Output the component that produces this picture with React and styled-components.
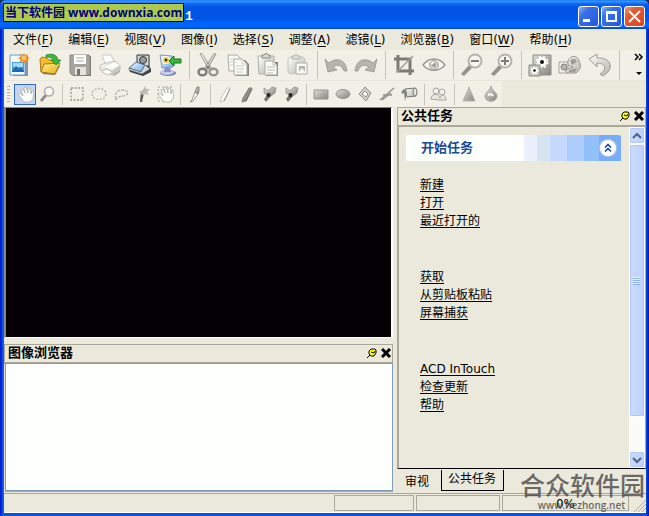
import styled, { createGlobalStyle, css } from "styled-components";

const GlobalStyle = createGlobalStyle`
  * {
    box-sizing: border-box;
  }
  body {
    margin: 0;
    background: #1a2a5c;
    font-family: "DejaVu Sans", "Noto Sans CJK SC", sans-serif;
    font-size: 12px;
    color: #000;
  }
  button {
    font: inherit;
    color: inherit;
    padding: 0;
    margin: 0;
    border: 0;
    background: none;
  }
`;

const menus = [
  ["文件", "F"],
  ["编辑", "E"],
  ["视图", "V"],
  ["图像", "I"],
  ["选择", "S"],
  ["调整", "A"],
  ["滤镜", "L"],
  ["浏览器", "B"],
  ["窗口", "W"],
  ["帮助", "H"],
];

const taskGroups = [
  ["新建", "打开", "最近打开的"],
  ["获取", "从剪贴板粘贴", "屏幕捕获"],
  ["ACD InTouch", "检查更新", "帮助"],
];

/* shared gradients for all toolbar icons */
const IconDefs = () => (
  <HiddenSvg aria-hidden="true">
    <defs>
      <linearGradient id="silver" x1="0" y1="0" x2="1" y2="1">
        <stop offset="0" stopColor="#fdfdfa" />
        <stop offset="1" stopColor="#b5b4ac" />
      </linearGradient>
      <linearGradient id="steel" x1="0" y1="0" x2="1" y2="1">
        <stop offset="0" stopColor="#dddcd6" />
        <stop offset="1" stopColor="#85847d" />
      </linearGradient>
      <linearGradient id="blue" x1="0" y1="0" x2="1" y2="1">
        <stop offset="0" stopColor="#f4faff" />
        <stop offset="1" stopColor="#69a9ea" />
      </linearGradient>
      <linearGradient id="gold" x1="0" y1="0" x2="1" y2="1">
        <stop offset="0" stopColor="#fff18a" />
        <stop offset="1" stopColor="#e8ac18" />
      </linearGradient>
    </defs>
  </HiddenSvg>
);

const mainIcons = {
  新建: (
    <>
      <path d="M4 3h16v20H5z" fill="#8c949c" />
      <path d="M2 2h15v20H2z" fill="#f4faff" stroke="#5aa0d8" />
      <path d="M4 9h12v10H4z" fill="#4a9be6" />
      <path d="M5 10h10v4H5z" fill="#a8dcff" />
      <path d="m4 18 4-5 3 3 2-2 3 4v1H4z" fill="#1f68b6" />
      <path d="m16 0 1.3 2.3L20 1.200l-.5 2.800L22 5l-2.300 1.500L20 9.500l-2.700-1.200L16 11l-1.500-2.700-2.700.9.5-2.800L10 5l2.500-1.200-.5-2.600 2.700 1z" fill="#f58a1f" />
      <circle cx="16" cy="5" r="2.500" fill="#ffc65c" />
    </>
  ),
  打开: (
    <>
      <path d="M4 21 17 22l5-9-2-1z" fill="#77736a" />
      <path d="M2 6 4 4l5 1 2 2 7 0v5l-2 9-13-2z" fill="#f3bd2c" stroke="#a77b13" />
      <path d="m6 11 16-1-5 11-14-2z" fill="url(#gold)" stroke="#a77b13" />
      <path d="M8 2c7-2 11 0 12 5h3l-5 5-5-5h3c-1-2-4-3-8-3z" fill="#38b83c" stroke="#168424" strokeWidth=".7" />
    </>
  ),
  保存: (
    <>
      <path d="M3 3h20v20H5z" fill="#77766f" />
      <path d="M2 2h19l1 1v19H4l-2-2z" fill="#a4a39d" stroke="#8b8a84" />
      <path d="M6 2h12v9H6z" fill="#fff" />
      <path d="M8 5h8M8 8h8" stroke="#aaa" />
      <path d="M7 14h11v8H7z" fill="#e3e2dd" />
      <path d="M9 16h3v6H9z" fill="#77766f" />
    </>
  ),
  打印: (
    <>
      <path d="m5 14 11 9 6-4v-5l-4-2z" fill="#aaa9a2" />
      <path d="M4 2h9l4 8-9 3z" fill="#fff" stroke="#c8c7c0" />
      <path d="m2 12 6-2 9-2 5 4v5l-8 5-12-5z" fill="url(#silver)" stroke="#c4c3bc" />
      <path d="m2 12 12 5 8-5-5-3-9 4z" fill="#fbfbf8" />
      <path d="m8 16 7 3-5 3-6-3z" fill="#fff" stroke="#c2c1ba" />
    </>
  ),
  扫描: (
    <>
      <path d="m1 16 6-5h13l3 5v3l-8 4-13-4z" fill="#3e4248" />
      <path d="M9 2h12v11H9z" fill="#d9dad6" stroke="#303236" />
      <circle cx="15" cy="7" r="3.500" fill="#999c9f" stroke="#333" />
      <path d="m1 15 7-6 9 3-4 7z" fill="url(#blue)" stroke="#4f6b8a" />
      <path d="m1 15 12 4 4-7 5 4-8 5-13-4z" fill="#d5d8dc" stroke="#555" strokeWidth=".6" />
    </>
  ),
  相机: (
    <>
      <ellipse cx="10" cy="20" rx="8" ry="3" fill="#7179a8" />
      <ellipse cx="9" cy="19" rx="7" ry="3" fill="#c6cbed" />
      <path d="m7 14 5-1 1 6H6z" fill="#8890c4" />
      <path d="m2 2 12 1 1 11-11 1z" fill="url(#blue)" stroke="#8494c8" />
      <circle cx="8" cy="7" r="4" fill="#fff" />
      <circle cx="8" cy="7" r="3" fill="#f4cf10" />
      <circle cx="8" cy="7" r="1.300" fill="#111" />
      <path d="m11 8 5-5v3h7v4h-7v3z" fill="#32b832" stroke="#137a17" />
    </>
  ),
  剪切: (
    <>
      <path d="m4 1 2-.5 9 14-2 2zM20 1l-2-.5-9 14 2 2z" fill="url(#silver)" stroke="#888780" strokeWidth=".8" />
      <ellipse cx="6.500" cy="19" rx="4" ry="3.300" fill="none" stroke="#7c7b75" strokeWidth="2.500" />
      <ellipse cx="17.500" cy="19" rx="4" ry="3.300" fill="none" stroke="#96958e" strokeWidth="2.500" />
      <circle cx="12" cy="14" r="1.500" fill="#777" />
    </>
  ),
  复制: (
    <>
      <path d="M2 2h9l4 4v12H3z" fill="#fafaf7" stroke="#aaa9a2" />
      <path d="M10 7h9l4 4v12H10z" fill="#85847d" />
      <path d="M8 6h8l5 5v11H8z" fill="#fafaf7" stroke="#aaa9a2" />
      <path d="M16 6v5h5M10 13h8M10 16h8M10 19h7M4 6h4M4 9h3M4 12h3" fill="none" stroke="#cccbc4" />
    </>
  ),
  粘贴: (
    <>
      <path d="M2 3h16v18H3z" fill="url(#silver)" stroke="#b0afa8" />
      <path d="M6 4V2h2l2-2 2 2h2v3H6z" fill="#d9d8d1" stroke="#888780" />
      <path d="M10 9h12v14H10z" fill="#85847d" />
      <path d="M9 8h8l4 4v10H9z" fill="#fafaf7" stroke="#aaa9a2" />
      <path d="M17 8v4h4M11 14h8M11 17h8M11 20h6" fill="none" stroke="#bcbbb4" />
    </>
  ),
  粘贴为新图像: (
    <>
      <path d="m2 6 2-2h13l2 2v14l-15 1-2-2z" fill="url(#silver)" stroke="#c4c3bc" />
      <path d="M6 5V3h2l2-2 2 2h2v3H6z" fill="#dddcd6" stroke="#b4b3ac" />
      <path d="M10 10h11v11H10z" fill="#fafaf7" stroke="#aeada6" />
      <path d="M13 13h6v6h-6z" fill="#b5b4ae" />
      <path d="m13 19 3-4 3 4z" fill="#fff" />
    </>
  ),
  撤消: <path d="m1 6 3 13 9-2-4-3c5-3 9-2 11 4h3C22 6 12 4 5 10z" fill="#b5b4ad" stroke="#8d8c86" strokeWidth=".7" />,
  重做: <path d="m23 6-3 13-9-2 4-3c-5-3-9-2-11 4H1C2 6 12 4 19 10z" fill="#b5b4ad" stroke="#8d8c86" strokeWidth=".7" />,
  裁剪: (
    <>
      <path d="M6 2v16h16M2 6h16v16" fill="none" stroke="#7c7b74" strokeWidth="3" />
      <path d="M5 19 21 3" stroke="#a09f98" strokeWidth="1.500" />
    </>
  ),
  红眼: (
    <>
      <path d="M1 12C7 4 17 4 23 12 17 19 7 19 1 12z" fill="#f8f7f2" stroke="#98978f" strokeWidth="1.300" />
      <circle cx="12" cy="12" r="4.500" fill="#d0cfc8" stroke="#a7a69f" />
      <circle cx="12" cy="12" r="2" fill="#9c9b94" />
      <circle cx="10.500" cy="10" r="1.200" fill="#fff" />
    </>
  ),
  缩小: (
    <>
      <path d="m9 12 3 3-8 8-3-2z" fill="#93928b" />
      <circle cx="15" cy="8" r="6.500" fill="#f6f5ef" stroke="#b5b4ac" strokeWidth="2" />
      <path d="M11 8h8" stroke="#7d7c75" strokeWidth="2" />
    </>
  ),
  放大: (
    <>
      <path d="m9 12 3 3-8 8-3-2z" fill="#93928b" />
      <circle cx="15" cy="8" r="6.500" fill="#f6f5ef" stroke="#b5b4ac" strokeWidth="2" />
      <path d="M11 8h8M15 4v8" stroke="#7d7c75" strokeWidth="2" />
    </>
  ),
  批处理: (
    <>
      <path d="M5 2h18v20H5z" fill="url(#steel)" stroke="#8b8a83" />
      <circle cx="14" cy="9" r="5" fill="#fff" stroke="#f7f6f0" strokeWidth="3" strokeDasharray="2 2" />
      <circle cx="14" cy="9" r="2" fill="#111" />
      <path d="M1 12h11v11H1z" fill="#c3c2bb" stroke="#8b8a83" />
      <circle cx="6.500" cy="17.500" r="3" fill="#fff" stroke="#fff" strokeWidth="2" strokeDasharray="1.500 1" />
      <circle cx="6.500" cy="17.500" r="1.300" fill="#111" />
    </>
  ),
  浏览器: (
    <>
      <path d="M1 9h9v11H1z" fill="#eeede7" stroke="#a6a59e" />
      <circle cx="6" cy="14" r="3" fill="#b5b4ad" stroke="#85847d" />
      <path d="M10 8c2-6 10-6 11 0 3 5 1 9-3 12H9l-2-3 8-3-5-2z" fill="url(#silver)" stroke="#95948d" />
      <path d="M12 8c2-3 6-3 7 1l-5 3zM11 17l8-2-2 4h-6z" fill="#9e9d96" />
    </>
  ),
  旋转: <path d="m1 6 8-5v4c16-1 17 12 6 18l-3-2c7-4 6-11-3-11v4z" fill="url(#silver)" stroke="#9e9d96" />,
};

const Tube = ({ dark }) => (
  <>
    <path d="M11 3h3L8 16l-4 1 1-4z" fill={dark ? "#8d8c86" : "#fafaf6"} stroke={dark ? "#85847d" : "#c6c5be"} />
    <path d="M14 4 8 16" stroke={dark ? "#6e6d67" : "#95948d"} />
  </>
);

const Brush = () => (
  <>
    <path d="m8 9 3 2-5 6-2-3z" fill="#74736d" />
    <path d="M4 3c2 1 3 3 5 2l3-3 4 1-1 5-4 3-3-1-4-2z" fill="url(#steel)" stroke="#8b8a83" strokeWidth=".7" />
    <circle cx="8.500" cy="10" r="2" fill="#222" />
  </>
);

const Palm = () => (
  <path
    d="m2 9 2-1 3 3-2-6 2-1 2 4-1-5 2-1 2 6 0-5 2 0 1 6 1-3 2 1-1 7-3 3H8z"
    fill="#fffffb"
    stroke="#b3b2ab"
    strokeWidth=".9"
  />
);

const toolIcons = {
  平移: <Palm />,
  缩放: (
    <>
      <path d="m7 9 2 2-5 6-2-2z" fill="#8b8a83" />
      <circle cx="11" cy="6.500" r="4.500" fill="#f7f6f0" stroke="#b0afa7" strokeWidth="1.500" />
    </>
  ),
  矩形选择: <path d="M3 3h12v12H3z" fill="none" stroke="#96958e" strokeWidth="1.300" strokeDasharray="2 1.500" />,
  椭圆选择: <ellipse cx="9" cy="9" rx="7" ry="5.500" fill="none" stroke="#b0afa8" strokeWidth="1.300" strokeDasharray="2 1.500" />,
  套索: <path d="M4 14c-2-4 1-9 6-9 9 0 6 6 1 6-3 0-6 1-8 5" fill="none" stroke="#b5b4ad" strokeWidth="1.300" strokeDasharray="3 1" />,
  魔棒: (
    <>
      <path d="m7 6 3 2-2 9H6z" fill="#5a5954" />
      <path d="m11 1 1 3 4 0-3 3 2 3-4-1-3 1-3-3 4-2z" fill="#bcbbb4" />
    </>
  ),
  移动选区: (
    <>
      <path d="M2 2h14v14H2z" fill="none" stroke="#a6a59e" strokeDasharray="2 2" />
      <Palm />
    </>
  ),
  吸管: (
    <>
      <path d="m9 7-3 8-2 2 3-1 5-7z" fill="#fff" stroke="#95948d" />
      <path d="m11 2 2 0v4l-1 3-3-2z" fill="url(#steel)" stroke="#88877f" />
    </>
  ),
  橡皮: <Tube />,
  画笔: <Tube dark />,
  修复: <Brush />,
  仿制: <Brush />,
  矩形: <path d="M2 5h14v9H2z" fill="url(#steel)" stroke="#96958e" />,
  椭圆: <ellipse cx="9" cy="9" rx="7" ry="4.500" fill="url(#steel)" stroke="#96958e" />,
  多边形: (
    <>
      <path d="m9 2 6 6-5 8-7-7z" fill="#d0cfc8" stroke="#8f8e87" />
      <path d="m9 6 3 3-2 3-4-3z" fill="#fff" stroke="#8f8e87" />
    </>
  ),
  线条: <path d="m2 15 14-12M5 10h9M4 15l9-7" stroke="#96958e" strokeWidth="1.500" />,
  填充: (
    <>
      <path d="m5 4 10-1 1 8-9 1z" fill="url(#silver)" stroke="#77766f" />
      <ellipse cx="15" cy="7" rx="2" ry="4" fill="#e5e4de" stroke="#77766f" />
      <path d="M6 4C2 4 1 7 2 9l2-1 1 8 2-8z" fill="#85847d" />
    </>
  ),
  图章: (
    <>
      <circle cx="6" cy="6" r="3" fill="#f0efe8" stroke="#a6a59e" />
      <circle cx="12" cy="7" r="3" fill="#f0efe8" stroke="#a6a59e" />
      <path d="M1 14c0-6 8-6 9-1 0-4 6-4 6 2l-7 0z" fill="#e8e7e0" stroke="#a6a59e" />
    </>
  ),
  锐化: <path d="m9 2 6 14H3z" fill="url(#steel)" stroke="#b6b5ae" />,
  模糊: (
    <>
      <path d="M9 1c1 5 6 6 6 10 0 7-12 7-12 0C3 7 8 6 9 1z" fill="url(#steel)" stroke="#a6a59e" />
      <path d="M6 10c2-1 4-1 5 1" stroke="#fff" strokeWidth="2" fill="none" />
    </>
  ),
};

const mainGroups = [
  ["新建", "打开", "保存", "打印", "扫描", "相机"],
  ["剪切", "复制", "粘贴", "粘贴为新图像"],
  ["撤消", "重做"],
  ["裁剪", "红眼"],
  ["缩小", "放大"],
  ["批处理", "浏览器", "旋转"],
];

const toolGroups = [
  ["平移", "缩放"],
  ["矩形选择", "椭圆选择", "套索", "魔棒", "移动选区"],
  ["吸管"],
  ["橡皮", "画笔", "修复", "仿制"],
  ["矩形", "椭圆", "多边形", "线条", "填充"],
  ["图章"],
  ["锐化", "模糊"],
];

const PaneHeader = ({ title }) => (
  <PaneBar>
    <PaneTitle>{title}</PaneTitle>
    <PaneButton aria-label="固定">
      <svg width="10" height="10" viewBox="0 0 10 10">
        <path d="M4 1h4l1 1v3L7 8H4L2 6V3z" fill="#ff0" stroke="#000" />
        <path d="m0 10 3-3M4 4l3 1 1-2" fill="none" stroke="#000" />
      </svg>
    </PaneButton>
    <PaneButton aria-label="关闭">
      <svg width="10" height="10" viewBox="0 0 10 10">
        <path d="m1 1 8 8M9 1 1 9" stroke="#000" strokeWidth="3" />
      </svg>
    </PaneButton>
  </PaneBar>
);

const App = () => (
  <Window>
    <GlobalStyle />
    <IconDefs />
    <TitleBar>
      <Caption>ACD Photo Editor v3.1</Caption>
      <SiteBadge>当下软件园 www.downxia.com</SiteBadge>
      <CaptionButton aria-label="最小化">
        <svg width="19" height="19" viewBox="0 0 19 19">
          <path d="M4 12h7v3H4z" fill="#fff" />
        </svg>
      </CaptionButton>
      <CaptionButton aria-label="最大化">
        <svg width="19" height="19" viewBox="0 0 19 19">
          <path d="M4 4h11v11H4zM6 7v6h7V7z" fill="#fff" fillRule="evenodd" />
        </svg>
      </CaptionButton>
      <CaptionButton aria-label="关闭" $close>
        <svg width="19" height="19" viewBox="0 0 19 19">
          <path d="m4 4 11 11M15 4 4 15" stroke="#fff" strokeWidth="2" />
        </svg>
      </CaptionButton>
    </TitleBar>

    <Client>
      <MenuBar>
        {menus.map(([label, key]) => (
          <MenuItem key={key}>
            {label}(<u>{key}</u>)
          </MenuItem>
        ))}
      </MenuBar>

      <MainToolbar>
        {mainGroups.map((group) => (
          <ToolGroup key={group[0]}>
            {group.map((name) => (
              <MainButton key={name} aria-label={name}>
                <svg width="24" height="24" viewBox="0 0 24 24">
                  {mainIcons[name]}
                </svg>
              </MainButton>
            ))}
          </ToolGroup>
        ))}
        <Overflow aria-label="更多">
          <svg width="12" height="24" viewBox="0 0 12 24">
            <path d="m2 1 3 3-3 3M6 1l3 3-3 3" fill="none" stroke="#000" strokeWidth="1.500" />
            <path d="M3 19h6l-3 3z" />
          </svg>
        </Overflow>
      </MainToolbar>

      <DrawToolbar>
        <DrawStrip>
          {toolGroups.map((group) => (
            <ToolGroup key={group[0]}>
              {group.map((name) => (
                <DrawButton key={name} aria-label={name} $active={name === "平移"}>
                  <svg width="18" height="18" viewBox="0 0 18 18">
                    {toolIcons[name]}
                  </svg>
                </DrawButton>
              ))}
            </ToolGroup>
          ))}
        </DrawStrip>
      </DrawToolbar>

      <Workspace>
        <LeftColumn>
          <Canvas />
          <BrowserPane>
            <PaneHeader title="图像浏览器" />
            <BrowserList />
          </BrowserPane>
        </LeftColumn>

        <TaskPane>
          <PaneHeader title="公共任务" />
          <TaskBody>
            <TaskContent>
              <TaskHeading>
                开始任务
                <CollapseButton aria-label="折叠">
                  <svg width="16" height="16" viewBox="0 0 16 16">
                    <path d="m5 7.500 3-3 3 3M5 11.500l3-3 3 3" fill="none" stroke="#123c9c" strokeWidth="1.500" />
                  </svg>
                </CollapseButton>
              </TaskHeading>
              <TaskList>
                {taskGroups.map((group) => (
                  <TaskGroup key={group[0]}>
                    {group.map((task) => (
                      <li key={task}>
                        <TaskLink href="#">{task}</TaskLink>
                      </li>
                    ))}
                  </TaskGroup>
                ))}
              </TaskList>
            </TaskContent>
            <ScrollBar>
              <ScrollButton aria-label="向上滚动">
                <svg width="10" height="8" viewBox="0 0 10 8">
                  <path d="m1 6 4-4 4 4" fill="none" stroke="#4d6185" strokeWidth="2" />
                </svg>
              </ScrollButton>
              <ScrollTrack>
                <ScrollThumb>
                  <svg width="8" height="8" viewBox="0 0 8 8">
                    <path d="M0 1.500h7M0 3.500h7M0 5.500h7M0 7.500h7" stroke="#8cb0f8" />
                    <path d="M0 .5h7M0 2.500h7M0 4.500h7M0 6.500h7" stroke="#eef4fe" />
                  </svg>
                </ScrollThumb>
              </ScrollTrack>
              <ScrollButton aria-label="向下滚动">
                <svg width="10" height="8" viewBox="0 0 10 8">
                  <path d="m1 2 4 4 4-4" fill="none" stroke="#4d6185" strokeWidth="2" />
                </svg>
              </ScrollButton>
            </ScrollBar>
          </TaskBody>
          <Tabs>
            <Tab>审视</Tab>
            <Tab $active>公共任务</Tab>
          </Tabs>
        </TaskPane>
      </Workspace>

      <StatusBar>
        <StatusCell $width={80} />
        <StatusCell $width={84} />
        <StatusCell $width={127}>0%</StatusCell>
        <Grip width="13" height="13" viewBox="0 0 13 13">
          <path d="m1 13 12-12M5 13l8-8M9 13l4-4" stroke="#b5b0a3" />
        </Grip>
      </StatusBar>
    </Client>

    <Watermark>
      <WatermarkName>合众软件园</WatermarkName>
      <WatermarkUrl>www.hezhong.net</WatermarkUrl>
    </Watermark>
  </Window>
);

export default App;

const HiddenSvg = styled.svg`
  position: absolute;
  width: 0;
  height: 0;
`;

const Window = styled.div`
  position: relative;
  display: flex;
  flex-direction: column;
  min-height: 100vh;
  padding: 0 3px 3px 4px;
  border-radius: 6px 6px 0 0;
  overflow: hidden;
  background: linear-gradient(to right, #0019cf 0, #0831d9 2px, #166aee 3px, #0855dd 4px, #0855dd calc(100% - 3px), #0831d9 calc(100% - 2px), #001ea0 100%);
`;

const TitleBar = styled.header`
  display: flex;
  align-items: center;
  gap: 2px;
  height: 29px;
  margin: 0 -3px 0 -4px;
  padding: 3px 4px 0 29px;
  background: linear-gradient(#0a6cf5 0, #3c9bff 1px, #0b66ee 4px, #0054e3 8px, #0055e5 18px, #0366fd 24px, #0264f8 27px, #0040c4 100%);
`;

const Caption = styled.h1`
  flex: 1;
  margin: 0;
  font: bold 13px "Liberation Mono", monospace;
  color: #fff;
`;

const SiteBadge = styled.div`
  position: absolute;
  left: 3px;
  top: 3px;
  height: 19px;
  padding: 0 1px;
  border: 1px solid #101a10;
  background: rgba(184, 208, 66, 0.94);
  font: bold 12px/18px "Open Sans", "Noto Sans CJK SC", sans-serif;
  color: #000080;
  white-space: nowrap;
`;

const CaptionButton = styled.button`
  display: grid;
  place-items: center;
  width: 21px;
  height: 21px;
  border: 1px solid #fff;
  border-radius: 3px;
  background: ${({ $close }) =>
    $close
      ? "linear-gradient(135deg, #f0a088 0, #e35a35 30%, #d8461c 100%)"
      : "linear-gradient(135deg, #8ab0f8 0, #3a70ea 30%, #2458dc 100%)"};
`;

const Client = styled.div`
  flex: 1;
  display: flex;
  flex-direction: column;
  background: #ebe9dc;
`;

const MenuBar = styled.nav`
  display: flex;
  align-items: center;
  gap: 15px;
  height: 21px;
  padding: 0 9px;
`;

const MenuItem = styled.button`
  line-height: 18px;
  white-space: nowrap;

  u {
    text-underline-offset: 2px;
  }
`;

const toolbar = css`
  display: flex;
  align-items: center;
  background: #f1efe6;
`;

const MainToolbar = styled.div`
  ${toolbar}
  height: 31px;
  padding-left: 1px;
  border-bottom: 1px solid #e9e7db;
`;

const DrawToolbar = styled.div`
  display: flex;
  height: 26px;
`;

const DrawStrip = styled.div`
  ${toolbar}
  padding-left: 10px;
  background:
    repeating-linear-gradient(#b5b2a5 0 1px, #f1efe6 1px 3px) 3px 5px / 3px 16px no-repeat,
    #f1efe6;
`;

const ToolGroup = styled.div`
  display: flex;

  & + & {
    padding-left: 8px;
    background: linear-gradient(#c5c2b8, #c5c2b8) 4px 0 / 1px 100% no-repeat;
  }
`;

const MainButton = styled.button`
  display: grid;
  place-items: center;
  width: 30px;
  height: 28px;
`;

const DrawButton = styled.button`
  display: grid;
  place-items: center;
  width: 22px;
  height: 21px;
  border: 1px solid ${({ $active }) => ($active ? "#316ac5" : "transparent")};
  background: ${({ $active }) => ($active ? "#c5d5ef" : "transparent")};
`;

const Overflow = styled.button`
  display: grid;
  place-items: center end;
  flex: 1;
  align-self: stretch;
  margin-left: 4px;
  padding-right: 1px;
  border-left: 1px solid #c5c2b8;
`;

const Workspace = styled.main`
  flex: 1;
  display: grid;
  grid-template-columns: 389fr 249fr;
  gap: 4px;
`;

const LeftColumn = styled.div`
  display: grid;
  grid-template-rows: 231fr 148fr;
  gap: 6px;
  padding-bottom: 1px;
`;

const Canvas = styled.section`
  border: 1px solid #8a877c;
  border-width: 1px 2px 1px 2px;
  border-right-color: #fff;
  border-bottom-color: #fff;
  background: #040004;
`;

const BrowserPane = styled.section`
  display: flex;
  flex-direction: column;
`;

const BrowserList = styled.div`
  flex: 1;
  margin: -1px 0 1px 1px;
  border: 1px solid #7f9db9;
  background: #fdfffd;
  box-shadow: 0 1px #aca899;
`;

const PaneBar = styled.div`
  display: flex;
  align-items: center;
  gap: 4px;
  height: 20px;
  padding: 0 1px 1px 3px;
  border: 1px solid #aca899;
  border-bottom-width: 2px;
`;

const PaneTitle = styled.h2`
  flex: 1;
  margin: 0;
  font-size: 13px;
  line-height: 16px;
`;

const PaneButton = styled.button`
  display: grid;
`;

const TaskPane = styled.aside`
  display: flex;
  flex-direction: column;
`;

const TaskBody = styled.div`
  flex: 1;
  display: flex;
  border-left: 2px solid #aca899;
  border-right: 1px solid #aca899;
  border-bottom: 1px solid #000;
`;

const TaskContent = styled.div`
  flex: 1;
  padding: 8px 8px 0 7px;
`;

const TaskHeading = styled.h3`
  display: flex;
  align-items: center;
  justify-content: space-between;
  height: 26px;
  margin: 0;
  padding: 0 5px 0 15px;
  border-radius: 3px 3px 0 0;
  background: linear-gradient(to right, #fdfffd 55%, #eaf1fd 55% 61%, #d6e4f2 61% 67%, #c6d8fc 67% 75%, #afcdfb 75% 83%, #92c0fb 83% 90%, #75adfa 90%);
  font-size: 13px;
  line-height: 24px;
  color: #1c4a94;
`;

const CollapseButton = styled.button`
  display: grid;
  border-radius: 50%;
  background: #fff;
  box-shadow: 0 0 1px 1px #b9c4dc;
`;

const TaskList = styled.div`
  display: flex;
  flex-direction: column;
  gap: 38px;
  padding: 15px 0 0 14px;
`;

const TaskGroup = styled.ul`
  margin: 0;
  padding: 0;
  list-style: none;
  line-height: 18px;
`;

const TaskLink = styled.a`
  color: #000;
  text-underline-offset: 2px;
`;

const ScrollBar = styled.div`
  display: flex;
  flex-direction: column;
  width: 16px;
  background: #fbfbf8;
`;

const scrollPiece = css`
  display: grid;
  place-items: center;
  border: 1px solid #fff;
  border-radius: 2px;
  background: linear-gradient(to right, #cbdcff, #bdd0fb);
  box-shadow: inset 0 0 0 1px #b3c8f6;
`;

const ScrollButton = styled.button`
  ${scrollPiece}
  height: 17px;
`;

const ScrollTrack = styled.div`
  flex: 1;
  display: grid;
  grid-template-rows: 89% 1fr;
`;

const ScrollThumb = styled.div`
  ${scrollPiece}
`;

const Tabs = styled.div`
  display: flex;
  align-items: flex-start;
  gap: 7px;
  height: 24px;
  padding: 1px 3px 0;
`;

const Tab = styled.button`
  height: 21px;
  padding: ${({ $active }) => ($active ? "1px 7px 2px 6px" : "4px 5px 0")};
  border: solid #000;
  border-width: ${({ $active }) => ($active ? "0 1px 1px" : "0")};
  line-height: 17px;
`;

const StatusBar = styled.footer`
  display: flex;
  justify-content: flex-end;
  align-items: center;
  gap: 2px;
  height: 20px;
  border-top: 1px solid #aca899;
  border-bottom: 1px solid #fff;
`;

const StatusCell = styled.div`
  width: ${({ $width }) => $width}px;
  height: 16px;
  border: 1px solid #aca899;
  line-height: 16px;
  text-align: center;
`;

const Grip = styled.svg`
  align-self: flex-end;
  margin-left: 2px;
`;

/* floats over the tabs and the status bar */
const Watermark = styled.div`
  position: absolute;
  right: 4px;
  bottom: 4px;
  text-align: center;
  font-family: "Open Sans", "Noto Sans CJK SC", sans-serif;
  color: rgba(70, 70, 70, 0.8);
  pointer-events: none;
`;

const WatermarkName = styled.div`
  margin-bottom: 2px;
  font-family: "Noto Sans CJK SC", sans-serif;
  font-size: 25px;
  font-weight: 500;
  line-height: 26px;
`;

const WatermarkUrl = styled.div`
  padding-right: 2px;
  font-size: 10px;
  font-weight: 600;
  line-height: 13px;
`;
